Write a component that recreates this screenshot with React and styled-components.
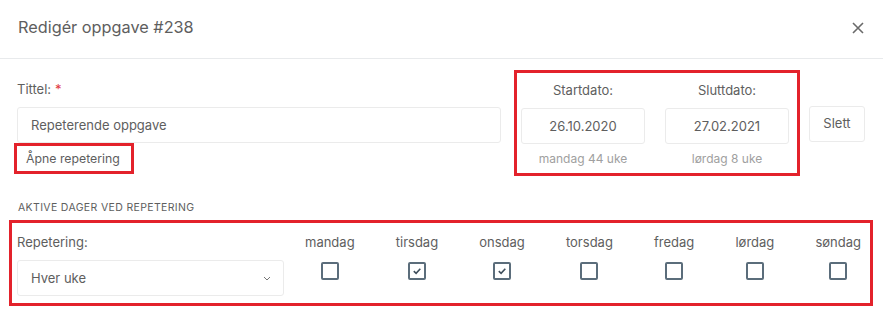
import React from "react";
import styled, { createGlobalStyle } from "styled-components";

const GlobalStyle = createGlobalStyle`
  html, body {
    margin: 0;
    padding: 0;
    background: #fff;
  }
  body {
    font-family: Inter, "Open Sans", "Liberation Sans", sans-serif;
    color: #5e5e5e;
  }
`;

const Modal = styled.div`
  width: 883px;
  height: 312px;
  background: #fff;
`;

const Header = styled.div`
  height: 58px;
  padding: 0 17px 0 18px;
  display: flex;
  align-items: center;
  justify-content: space-between;
  border-bottom: 1px solid #e8eaec;
`;

const Title = styled.h1`
  margin: 0;
  font-size: 16.3px;
  font-weight: 400;
  color: #5e5e5e;
  padding-bottom: 4px;
`;

const Close = styled.button`
  border: none;
  background: none;
  padding: 0;
  width: 16px;
  height: 16px;
  display: flex;
  align-items: center;
  justify-content: center;
  cursor: pointer;
  margin-bottom: 2px;
`;

const Body = styled.div`
  padding: 11px 0 0 0;
`;

const TopRow = styled.div`
  display: flex;
  align-items: flex-start;
  padding-left: 17px;
`;

const TitleCol = styled.div`
  width: 484px;
  padding-top: 9px;
`;

const Label = styled.div`
  font-size: 13px;
  line-height: 20px;
  color: #5e5e5e;
  text-align: ${({ $center }) => ($center ? "center" : "left")};
`;

const Star = styled.span`
  color: #e0383e;
  margin-left: 4px;
`;

const Input = styled.div`
  height: 36px;
  box-sizing: border-box;
  border: 1px solid #ebebeb;
  border-radius: 3px;
  display: flex;
  align-items: center;
  justify-content: ${({ $center }) => ($center ? "center" : "flex-start")};
  padding: 0 13px;
  font-size: 13px;
  color: #5e5e5e;
  margin-top: 8px;
`;

const Marked = styled.div`
  display: inline-flex;
  border: 3px solid #e3222b;
  padding: 4px 11px 4px 9px;
  margin: 0 0 0 -3px;
  font-size: 12.3px;
  line-height: 17px;
  color: #5e5e5e;
`;

const DateBox = styled.div`
  margin-left: 13px;
  border: 3px solid #e3222b;
  width: 286px;
  height: 106px;
  box-sizing: border-box;
  padding: 7px 8px 0 4px;
  display: flex;
  gap: 20px;
`;

const DateCol = styled.div`
  width: 124px;
`;

const Hint = styled.div`
  font-size: 12px;
  color: #a0a0a0;
  text-align: center;
  margin-top: 7px;
  line-height: 16px;
`;

const SlettButton = styled.button`
  margin: 36px 0 0 9px;
  width: 56px;
  height: 36px;
  border: 1px solid #ebebeb;
  border-radius: 3px;
  background: #fff;
  font-family: inherit;
  font-size: 13px;
  color: #5e5e5e;
  padding: 0 0 2px;
`;

const SectionTitle = styled.div`
  margin: 25px 0 0 18px;
  font-size: 10.5px;
  letter-spacing: 0.35px;
  text-transform: uppercase;
  color: #5e5e5e;
  line-height: 14px;
`;

const RepeatBox = styled.div`
  margin: 5px 10px 0 9px;
  border: 3px solid #e3222b;
  height: 86px;
  box-sizing: border-box;
  padding: 9px 9px 0 5px;
  display: flex;
  align-items: flex-start;
`;

const SelectCol = styled.div`
  width: 267px;
`;

const Select = styled(Input)`
  justify-content: space-between;
  padding: 0 12px 0 13px;
  margin-top: 8px;
`;

const Days = styled.div`
  flex: 1;
  margin-left: 21px;
  display: flex;
  justify-content: space-between;
`;

const Day = styled.div`
  display: flex;
  flex-direction: column;
  align-items: center;
  font-size: 13px;
  line-height: 20px;
  color: #5e5e5e;
`;

const Check = styled.span`
  margin-top: 10px;
  width: 18px;
  height: 18px;
  box-sizing: border-box;
  border: 2px solid #5b6d7b;
  border-radius: 2px;
  display: flex;
  align-items: center;
  justify-content: center;
`;

const days = [
  { name: "mandag", on: false },
  { name: "tirsdag", on: true },
  { name: "onsdag", on: true },
  { name: "torsdag", on: false },
  { name: "fredag", on: false },
  { name: "lørdag", on: false },
  { name: "søndag", on: false },
];

export default function App() {
  return (
    <>
      <GlobalStyle />
      <Modal>
        <Header>
          <Title>Redigér oppgave #238</Title>
          <Close aria-label="Lukk">
            <svg width="12" height="12" viewBox="0 0 12 12">
              <path d="M1 1L11 11M11 1L1 11" stroke="#6a6a6a" strokeWidth="1.6" />
            </svg>
          </Close>
        </Header>
        <Body>
          <TopRow>
            <TitleCol>
              <Label>
                Tittel:<Star>*</Star>
              </Label>
              <Input>Repeterende oppgave</Input>
              <Marked>Åpne repetering</Marked>
            </TitleCol>
            <DateBox>
              <DateCol>
                <Label $center>Startdato:</Label>
                <Input $center>26.10.2020</Input>
                <Hint>mandag 44 uke</Hint>
              </DateCol>
              <DateCol>
                <Label $center>Sluttdato:</Label>
                <Input $center>27.02.2021</Input>
                <Hint>lørdag 8 uke</Hint>
              </DateCol>
            </DateBox>
            <SlettButton>Slett</SlettButton>
          </TopRow>
          <SectionTitle>Aktive dager ved repetering</SectionTitle>
          <RepeatBox>
            <SelectCol>
              <Label>Repetering:</Label>
              <Select>
                <span>Hver uke</span>
                <svg width="8" height="5" viewBox="0 0 8 5">
                  <path d="M1 1l3 3 3-3" fill="none" stroke="#777" strokeWidth="1" />
                </svg>
              </Select>
            </SelectCol>
            <Days>
              {days.map((d) => (
                <Day key={d.name}>
                  {d.name}
                  <Check>
                    {d.on && (
                      <svg width="10" height="8" viewBox="0 0 10 8">
                        <path d="M1.8 4.2l2.3 2.2 4.2-4.6" fill="none" stroke="#3f4f5c" strokeWidth="1.6" />
                      </svg>
                    )}
                  </Check>
                </Day>
              ))}
            </Days>
          </RepeatBox>
        </Body>
      </Modal>
    </>
  );
}
